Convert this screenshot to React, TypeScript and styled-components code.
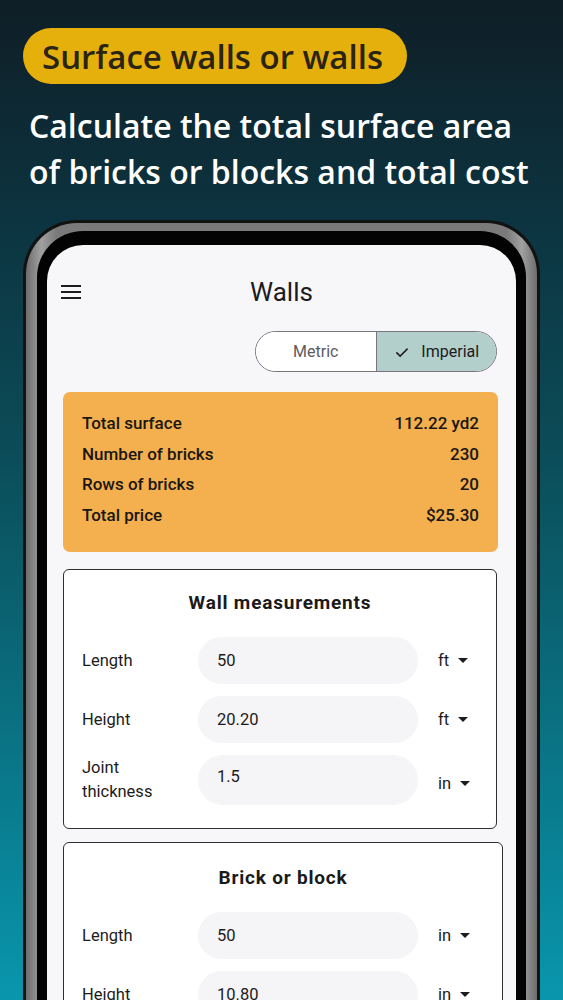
import React from "react";
import styled, { createGlobalStyle } from "styled-components";

const GlobalStyle = createGlobalStyle`
  html, body {
    margin: 0;
    padding: 0;
  }
  body {
    font-family: Roboto, "Liberation Sans", sans-serif;
    -webkit-font-smoothing: antialiased;
  }
  * {
    box-sizing: border-box;
  }
`;

const Page = styled.div`
  width: 563px;
  height: 1000px;
  overflow: hidden;
  background: linear-gradient(
    180deg,
    #0f1e26 0%,
    #0c3440 22%,
    #0b4c58 45%,
    #0a6b7b 68%,
    #0996ad 100%
  );
  display: flex;
  flex-direction: column;
`;

const Hero = styled.div`
  padding: 28px 23px 0 23px;
`;

const Badge = styled.div`
  display: inline-flex;
  align-items: center;
  height: 56px;
  padding: 0 24px 0 19px;
  border-radius: 28px;
  background: #e6b00c;
  color: #2a2414;
  font-family: "Open Sans", Lato, sans-serif;
  font-weight: 600;
  font-size: 33px;
`;

const Headline = styled.h1`
  margin: 19px 0 0 6px;
  color: #ffffff;
  font-family: "Open Sans", Lato, sans-serif;
  font-weight: 600;
  font-size: 32px;
  line-height: 46px;
  white-space: nowrap;
`;

const Phone = styled.div`
  margin: 25px 23px 0 23px;
  flex: 1;
  border: 3px solid #121212;
  border-bottom: none;
  border-radius: 54px 54px 0 0;
  background: linear-gradient(90deg, #6d6d6d 0%, #a0a0a0 3%, #7a7a7a 6%, #7a7a7a 94%, #a0a0a0 97%, #6d6d6d 100%);
  padding: 8px 11px 0 11px;
  display: flex;
`;

const Bezel = styled.div`
  flex: 1;
  background: #030303;
  border-radius: 46px 46px 0 0;
  padding: 14px 10px 0 10px;
  display: flex;
`;

const Screen = styled.div`
  flex: 1;
  background: #f7f6f9;
  border-radius: 36px 36px 0 0;
  padding: 0 16px;
  display: flex;
  flex-direction: column;
  overflow: hidden;
`;

const Header = styled.div`
  height: 50px;
  margin-top: 22px;
  display: flex;
  align-items: center;
`;

const MenuButton = styled.div`
  width: 20px;
  display: flex;
  flex-direction: column;
  gap: 4px;
  margin-left: -2px;
`;

const MenuLine = styled.span`
  display: block;
  height: 2px;
  background: #1d1b20;
`;

const Title = styled.div`
  flex: 1;
  text-align: center;
  margin-right: 18px;
  font-size: 26px;
  color: #1d1b20;
  font-weight: 400;
`;

const ToggleRow = styled.div`
  display: flex;
  justify-content: flex-end;
  margin-top: 14px;
  padding-right: 3px;
`;

const Toggle = styled.div`
  display: flex;
  width: 242px;
  height: 41px;
  border: 1px solid #79747e;
  border-radius: 21px;
  overflow: hidden;
`;

const Segment = styled.div<{ $active?: boolean }>`
  flex: 1;
  display: flex;
  align-items: center;
  justify-content: center;
  gap: 10px;
  font-size: 16px;
  background: ${({ $active }) => ($active ? "#b3cfcb" : "#ffffff")};
  color: ${({ $active }) => ($active ? "#1d1b20" : "#5d5a62")};
  & + & {
    border-left: 1px solid #79747e;
  }
`;

const ResultCard = styled.div`
  margin-top: 20px;
  margin-right: 2px;
  background: #f4b04e;
  border-radius: 7px;
  padding: 16px 19px 22px 19px;
`;

const ResultRow = styled.div`
  display: flex;
  justify-content: space-between;
  align-items: center;
  height: 30.5px;
  font-size: 17px;
  font-weight: 500;
  color: #1a1712;
`;

const Card = styled.div<{ $right?: number }>`
  margin-top: 17px;
  margin-right: ${({ $right }) => $right ?? 3}px;
  background: #ffffff;
  border: 1.5px solid #2f2f33;
  border-radius: 6px;
  padding: 21px 0 23px 18px;
  display: flex;
  flex-direction: column;
  gap: 12px;
  & + & {
    margin-top: 13px;
    padding-top: 23px;
  }
`;

const CardTitle = styled.div`
  text-align: center;
  padding-right: 18px;
  font-size: 19px;
  font-weight: 700;
  letter-spacing: 0.8px;
  color: #1a1a1a;
  margin-bottom: 11px;
`;

const FieldRow = styled.div`
  display: grid;
  grid-template-columns: 116px 220px 1fr;
  align-items: center;
`;

const FieldLabel = styled.div`
  font-size: 16.5px;
  line-height: 24px;
  color: #1d1b20;
`;

const FieldInput = styled.div<{ $tall?: boolean }>`
  height: ${({ $tall }) => ($tall ? 50 : 47)}px;
  border-radius: 25px;
  background: #f5f4f7;
  display: flex;
  align-items: ${({ $tall }) => ($tall ? "flex-start" : "center")};
  padding: ${({ $tall }) => ($tall ? "12px 0 0 19px" : "0 0 0 19px")};
  font-size: 16.5px;
  color: #1d1b20;
`;

const Unit = styled.div<{ $low?: boolean }>`
  display: flex;
  align-items: center;
  gap: 9px;
  padding-left: 20px;
  font-size: 16.5px;
  color: #1d1b20;
  margin-top: ${({ $low }) => ($low ? "6px" : "0")};
`;

const Caret = () => (
  <svg width="10" height="5" viewBox="0 0 10 5">
    <path d="M0 0 L10 0 L5 5 Z" fill="#1d1b20" />
  </svg>
);

const Check = () => (
  <svg width="18" height="18" viewBox="0 0 24 24">
    <path d="M4.5 12.5 L9.5 17.5 L19.5 7.5" fill="none" stroke="#1d1b20" strokeWidth="2" />
  </svg>
);

type Field = { label: string; value: string; unit: string; tall?: boolean };

const wallFields: Field[] = [
  { label: "Length", value: "50", unit: "ft" },
  { label: "Height", value: "20.20", unit: "ft" },
  { label: "Joint thickness", value: "1.5", unit: "in", tall: true },
];

const brickFields: Field[] = [
  { label: "Length", value: "50", unit: "in" },
  { label: "Height", value: "10.80", unit: "in" },
];

const results = [
  ["Total surface", "112.22 yd2"],
  ["Number of bricks", "230"],
  ["Rows of bricks", "20"],
  ["Total price", "$25.30"],
];

const FieldRows = ({ fields }: { fields: Field[] }) => (
  <>
    {fields.map((f) => (
      <FieldRow key={f.label}>
        <FieldLabel>{f.tall ? <>Joint<br />thickness</> : f.label}</FieldLabel>
        <FieldInput $tall={f.tall}>{f.value}</FieldInput>
        <Unit $low={f.tall}>
          {f.unit}
          <Caret />
        </Unit>
      </FieldRow>
    ))}
  </>
);

export default function App() {
  return (
    <>
      <GlobalStyle />
      <Page>
        <Hero>
          <Badge>Surface walls or walls</Badge>
          <Headline>
            Calculate the total surface area
            <br />
            of bricks or blocks and total cost
          </Headline>
        </Hero>
        <Phone>
          <Bezel>
            <Screen>
              <Header>
                <MenuButton>
                  <MenuLine />
                  <MenuLine />
                  <MenuLine />
                </MenuButton>
                <Title>Walls</Title>
              </Header>
              <ToggleRow>
                <Toggle>
                  <Segment>Metric</Segment>
                  <Segment $active>
                    <Check />
                    Imperial
                  </Segment>
                </Toggle>
              </ToggleRow>
              <ResultCard>
                {results.map(([k, v]) => (
                  <ResultRow key={k}>
                    <span>{k}</span>
                    <span>{v}</span>
                  </ResultRow>
                ))}
              </ResultCard>
              <Card>
                <CardTitle>Wall measurements</CardTitle>
                <FieldRows fields={wallFields} />
              </Card>
              <Card $right={-3}>
                <CardTitle>Brick or block</CardTitle>
                <FieldRows fields={brickFields} />
              </Card>
            </Screen>
          </Bezel>
        </Phone>
      </Page>
    </>
  );
}
